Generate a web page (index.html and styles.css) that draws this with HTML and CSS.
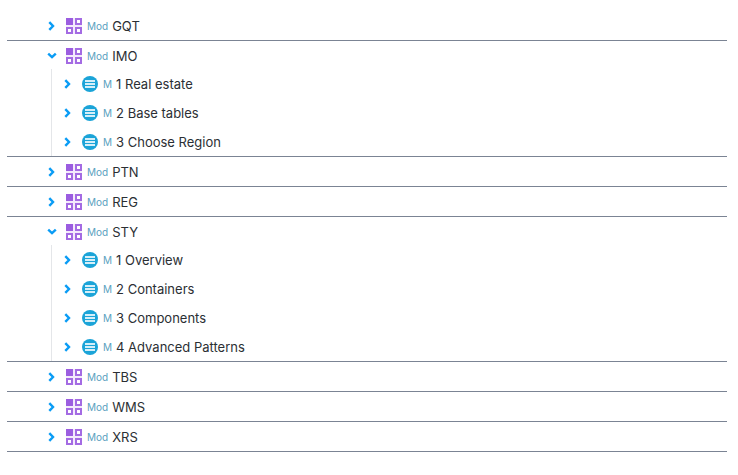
FILE: index.html
```html
<!DOCTYPE html>
<html lang="en">
<head>
<meta charset="utf-8">
<title>Modules</title>
<link rel="stylesheet" href="styles.css">
</head>
<body>
<svg class="sprite" aria-hidden="true">
  <symbol id="right" viewBox="0 0 10 10"><path d="M2.3 1.2 6 5 2.3 8.8" fill="none" stroke="#0a9cf5" stroke-width="2.4"/></symbol>
  <symbol id="down" viewBox="0 0 10 10"><path d="M1.2 2.7 5 6.2 8.8 2.7" fill="none" stroke="#0a9cf5" stroke-width="2.4"/></symbol>
  <symbol id="module" viewBox="0 0 16 16">
    <path d="M0 0h16v16H0z" fill="#eee0fb"/>
    <path d="M7 0h2v16H7zM0 7h16v2H0z" fill="#f3eafc"/>
    <path d="M0 0h7v7H0z" fill="#9b5de0"/>
    <path d="M10 1h5v5h-5zM1 10h5v5H1zM10 10h5v5h-5z" fill="#fff" stroke="#a46be3" stroke-width="2"/>
  </symbol>
  <symbol id="menu" viewBox="0 0 16 16">
    <circle cx="8" cy="8" r="8" fill="#1ba4d8"/>
    <path d="M3 4h10v2H3zM3 7h10v2H3zM3 10h10v2H3z" fill="#d5eff9"/>
  </symbol>
</svg>
<ul class="tree">
  <li class="module"><div class="row"><button class="toggle" aria-label="Expand GQT"><svg><use href="#right"/></svg></button><svg class="icon"><use href="#module"/></svg><span class="kind">Mod</span><span class="name">GQT</span></div></li>
  <li class="module"><div class="row"><button class="toggle" aria-label="Collapse IMO"><svg><use href="#down"/></svg></button><svg class="icon"><use href="#module"/></svg><span class="kind">Mod</span><span class="name">IMO</span></div>
    <ul class="children">
      <li class="row"><button class="toggle" aria-label="Expand Real estate"><svg><use href="#right"/></svg></button><svg class="icon"><use href="#menu"/></svg><span class="kind">M</span><span class="name">1 Real estate</span></li>
      <li class="row"><button class="toggle" aria-label="Expand Base tables"><svg><use href="#right"/></svg></button><svg class="icon"><use href="#menu"/></svg><span class="kind">M</span><span class="name">2 Base tables</span></li>
      <li class="row"><button class="toggle" aria-label="Expand Choose Region"><svg><use href="#right"/></svg></button><svg class="icon"><use href="#menu"/></svg><span class="kind">M</span><span class="name">3 Choose Region</span></li>
    </ul></li>
  <li class="module"><div class="row"><button class="toggle" aria-label="Expand PTN"><svg><use href="#right"/></svg></button><svg class="icon"><use href="#module"/></svg><span class="kind">Mod</span><span class="name">PTN</span></div></li>
  <li class="module"><div class="row"><button class="toggle" aria-label="Expand REG"><svg><use href="#right"/></svg></button><svg class="icon"><use href="#module"/></svg><span class="kind">Mod</span><span class="name">REG</span></div></li>
  <li class="module"><div class="row"><button class="toggle" aria-label="Collapse STY"><svg><use href="#down"/></svg></button><svg class="icon"><use href="#module"/></svg><span class="kind">Mod</span><span class="name">STY</span></div>
    <ul class="children">
      <li class="row"><button class="toggle" aria-label="Expand Overview"><svg><use href="#right"/></svg></button><svg class="icon"><use href="#menu"/></svg><span class="kind">M</span><span class="name">1 Overview</span></li>
      <li class="row"><button class="toggle" aria-label="Expand Containers"><svg><use href="#right"/></svg></button><svg class="icon"><use href="#menu"/></svg><span class="kind">M</span><span class="name">2 Containers</span></li>
      <li class="row"><button class="toggle" aria-label="Expand Components"><svg><use href="#right"/></svg></button><svg class="icon"><use href="#menu"/></svg><span class="kind">M</span><span class="name">3 Components</span></li>
      <li class="row"><button class="toggle" aria-label="Expand Advanced Patterns"><svg><use href="#right"/></svg></button><svg class="icon"><use href="#menu"/></svg><span class="kind">M</span><span class="name">4 Advanced Patterns</span></li>
    </ul></li>
  <li class="module"><div class="row"><button class="toggle" aria-label="Expand TBS"><svg><use href="#right"/></svg></button><svg class="icon"><use href="#module"/></svg><span class="kind">Mod</span><span class="name">TBS</span></div></li>
  <li class="module"><div class="row"><button class="toggle" aria-label="Expand WMS"><svg><use href="#right"/></svg></button><svg class="icon"><use href="#module"/></svg><span class="kind">Mod</span><span class="name">WMS</span></div></li>
  <li class="module"><div class="row"><button class="toggle" aria-label="Expand XRS"><svg><use href="#right"/></svg></button><svg class="icon"><use href="#module"/></svg><span class="kind">Mod</span><span class="name">XRS</span></div></li>
</ul>
</body>
</html>
```
FILE: styles.css
```css
body {
  margin: 0;
  padding: 11px 11px 0 7px;
  background: #fff;
  color: #2b2f34;
  font: 13px/18px Inter, "Liberation Sans", sans-serif;
}

.sprite {
  position: absolute;
  width: 0;
  height: 0;
}

.tree,
.children {
  margin: 0;
  padding: 0;
  list-style: none;
}

.module {
  padding-left: 40px;
  border-bottom: 1px solid #7b8494;
}

.row {
  display: flex;
  align-items: center;
  height: 29px;
}

.children {
  margin: -1px 0 0 4px;
  padding-left: 11px;
  border-left: 1px solid #e4e6e9;
}

.toggle {
  width: 10px;
  height: 10px;
  margin: 0 9px 0 0;
  padding: 0;
  border: 0;
  background: none;
}

.toggle svg {
  display: block;
  width: 10px;
  height: 10px;
}

.icon {
  flex: none;
  width: 16px;
  height: 16px;
}

.kind {
  margin: 0 4px 0 5px;
  color: #5b9fc0;
  font-size: 10px;
}
```
